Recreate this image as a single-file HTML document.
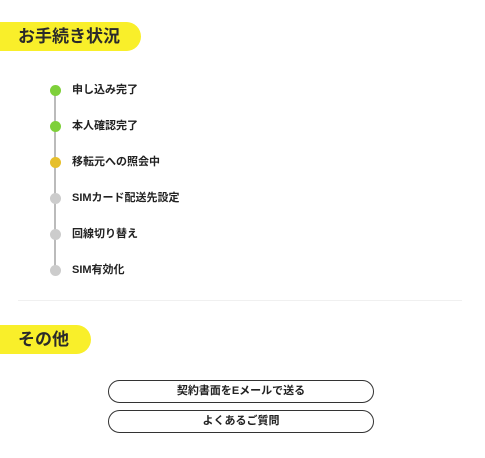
<!DOCTYPE html>
<html><head><meta charset="utf-8"><style>
body{margin:0;width:485px;height:458px;background:#fff;font-family:"Liberation Sans","Noto Sans CJK JP",sans-serif;color:#222;position:relative;overflow:hidden}
.ban{position:absolute;left:0;background:#f9ef2a;border-radius:0 15px 15px 0;font-weight:bold;font-size:17px;line-height:29px;padding-left:18px;box-sizing:border-box;color:#2a2a2a}
.line{position:absolute;left:54px;top:90px;width:2px;height:180px;background:#bbb}
.dot{position:absolute;left:50px;width:11px;height:11px;border-radius:50%}
.lbl{position:absolute;left:72px;font-size:11px;font-weight:bold;line-height:14px}
.hr{position:absolute;left:18px;top:300px;width:444px;height:1px;background:#f0f0f0}
.btn{position:absolute;left:108px;width:266px;height:23px;box-sizing:border-box;border:1.5px solid #333;border-radius:12px;text-align:center;font-size:11px;font-weight:bold;line-height:20px}
</style></head><body>
<div class="ban" style="top:22px;width:141px">お手続き状況</div>
<div class="line"></div>
<div class="dot" style="top:85px;background:#7ed03a"></div><div class="lbl" style="top:83px">申し込み完了</div>
<div class="dot" style="top:121px;background:#7ed03a"></div><div class="lbl" style="top:119px">本人確認完了</div>
<div class="dot" style="top:157px;background:#e6bf2c"></div><div class="lbl" style="top:155px">移転元への照会中</div>
<div class="dot" style="top:193px;background:#ccc"></div><div class="lbl" style="top:191px">SIMカード配送先設定</div>
<div class="dot" style="top:229px;background:#ccc"></div><div class="lbl" style="top:227px">回線切り替え</div>
<div class="dot" style="top:265px;background:#ccc"></div><div class="lbl" style="top:263px">SIM有効化</div>
<div class="hr"></div>
<div class="ban" style="top:325px;width:91px">その他</div>
<div class="btn" style="top:380px">契約書面をEメールで送る</div>
<div class="btn" style="top:410px">よくあるご質問</div>
</body></html>
